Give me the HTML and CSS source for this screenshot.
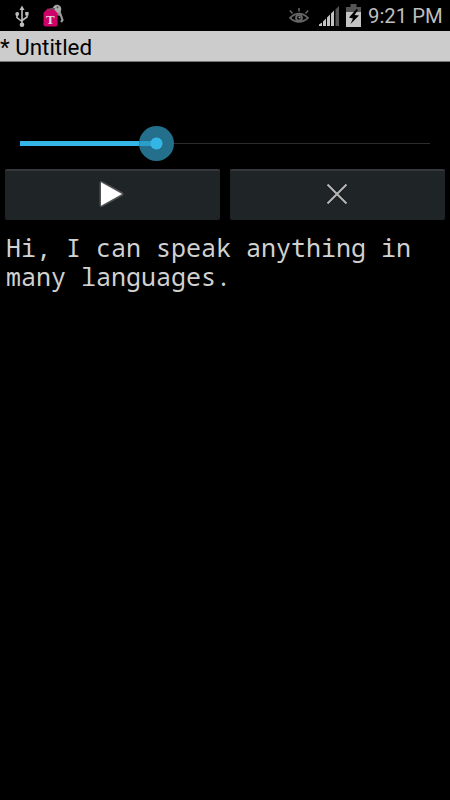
FILE: index.html
```
<!DOCTYPE html>
<html lang="en">
<head>
    <meta charset="UTF-8">
    <meta name="viewport" content="width=device-width, initial-scale=1.0">
    <title>Untitled</title>
    <link rel="stylesheet" href="styles.css">
</head>
<body>
    <div class="status-bar">
        <div class="notifications">
            <svg class="usb-icon" width="14" height="24" viewBox="0 0 14 24">
                <path d="M7 4V20M2 9V12.500L7 16.500M12 8.500V12L7 15.500" fill="none" stroke="#bdbdbd" stroke-width="1.600"/>
                <path d="M7 0.500L9.500 5H4.500Z" fill="#bdbdbd"/>
                <circle cx="7" cy="19.700" r="2.300" fill="#bdbdbd"/>
                <circle cx="2.200" cy="9" r="1.900" fill="#bdbdbd"/>
                <rect x="10.200" y="7" width="3.400" height="3.400" fill="#bdbdbd"/>
            </svg>
            <svg class="carrier-icon" width="22" height="24" viewBox="0 0 22 24">
                <path d="M12 5L17 6L17 12L13 11Z" fill="#888"/>
                <path d="M16 6L19.500 16L18 18" fill="none" stroke="#999" stroke-width="2.200"/>
                <circle cx="14" cy="5" r="4.300" fill="#aaa"/>
                <circle cx="14.500" cy="3.300" r="1" fill="#555"/>
                <path d="M4.500 4.500H10L14.500 9V20.500Q14.500 22.500 12.500 22.500H2.500Q0.500 22.500 0.500 20.500V9Z" fill="#cf0067"/>
                <path d="M6 7Q7.500 3.500 12 5" fill="none" stroke="#555" stroke-width="1.600"/>
                <text x="7.400" y="20.300" class="carrier-letter">T</text>
            </svg>
        </div>
        <div class="indicators">
            <svg class="eye-icon" width="20" height="18" viewBox="0 0 20 18">
                <path d="M1 10.800Q10 2.500 19 10.800Q10 19 1 10.800Z" fill="none" stroke="#666" stroke-width="1.800"/>
                <circle cx="10" cy="10.800" r="2.900" fill="none" stroke="#666" stroke-width="2"/>
                <circle cx="10.500" cy="10.500" r="1" fill="#999"/>
                <path d="M10 1V4.500M0.800 3.500L3.500 6.500M19.200 3.500L16.500 6.500" stroke="#666" stroke-width="1.500"/>
            </svg>
            <svg class="signal-icon" width="21" height="21" viewBox="0 0 21 21">
                <path d="M0 20V18.500L3 16.500V20ZM4 20V15.500L7 12.500V20ZM8 20V11.500L11 8.500V20ZM12 20V7.500L15 4.500V20Z" fill="#c4c4c4"/>
                <path d="M16.500 20V3.500L20 0V20Z" fill="#555"/>
            </svg>
            <svg class="battery-icon" width="15" height="23" viewBox="0 0 15 23">
                <path d="M4.500 0H10.500V3H15V9H0V3H4.500Z" fill="#555"/>
                <rect y="8" width="15" height="15" fill="#c4c4c4"/>
                <path d="M10.500 5L3 13.500L7 14.500L4.500 20L13 11.500L8.500 11L12 6Z" fill="#000"/>
            </svg>
            <span class="clock">9:21 PM</span>
        </div>
    </div>

    <div class="title-bar">* Untitled</div>

    <div class="slider">
        <div class="slider-fill"></div>
        <div class="slider-thumb"></div>
        <div class="slider-track"></div>
    </div>

    <div class="controls">
        <button class="control-btn" aria-label="Play">
            <svg width="28" height="30" viewBox="0 0 28 30">
                <path d="M3.500 4L23.500 15L3.500 26Z" fill="#fff" stroke="#505254" stroke-width="4" stroke-linejoin="round"/>
                <path d="M3 3.200L24 15L3 26.800Z" fill="#fff"/>
            </svg>
        </button>
        <button class="control-btn" aria-label="Clear">
            <svg width="28" height="30" viewBox="0 0 28 30">
                <path d="M4.300 5.300L23.700 24.700M23.700 5.300L4.300 24.700" stroke="#14171a" stroke-width="4"/>
                <path d="M4.500 5.500L23.500 24.500M23.500 5.500L4.500 24.500" stroke="#b4b4b4" stroke-width="2.200"/>
            </svg>
        </button>
    </div>

    <div class="speech-text">Hi, I can speak anything in many languages.</div>
</body>
</html>
```
FILE: styles.css
```
/* General Styles */
body {
    margin: 0;
    background: #000;
    font-family: Roboto, sans-serif;
    min-height: 100vh;
}

svg {
    display: block;
    flex-shrink: 0;
}

/* Status Bar */
.status-bar {
    height: 31px;
    display: flex;
    justify-content: space-between;
}

.notifications,
.indicators {
    display: flex;
    align-items: flex-start;
}

.usb-icon {
    margin: 5px 0 0 15px;
}

.carrier-icon {
    margin: 4px 0 0 14px;
}

.carrier-letter {
    font-family: "Liberation Serif", serif;
    font-size: 13px;
    font-weight: bold;
    text-anchor: middle;
    fill: #ddd;
}

.eye-icon {
    margin: 7px 10px 0 0;
}

.signal-icon {
    margin: 6px 6px 0 0;
}

.battery-icon {
    margin: 4px 7px 0 0;
}

.clock {
    width: 82px;
    color: #bebebe;
    font-size: 20.3px;
    line-height: 32px;
    white-space: nowrap;
}

/* Title Bar */
.title-bar {
    height: 31px;
    box-sizing: border-box;
    border-bottom: 1px solid #777;
    background: #ccc;
    color: #000;
    font-size: 22.4px;
    line-height: 32px;
}

/* Slider */
.slider {
    display: flex;
    align-items: center;
    height: 35px;
    margin: 64px 20px 8px;
}

.slider-fill {
    width: 119px;
    height: 5px;
    background: #33b5e5;
}

.slider-thumb {
    width: 35px;
    height: 35px;
    border-radius: 50%;
    background:
        radial-gradient(circle, #33b5e5 5.700px, transparent 6.300px),
        linear-gradient(#2a9dc8, #2a9dc8) left center / 17px 5px no-repeat,
        #236f8c;
}

.slider-track {
    flex: 1;
    height: 1px;
    background: #2c2c2c;
}

/* Buttons */
.controls {
    display: flex;
    gap: 10px;
    padding: 0 5px;
}

.control-btn {
    flex: 1;
    display: flex;
    justify-content: center;
    align-items: center;
    height: 51px;
    padding: 0 1px 3px 0;
    border: none;
    border-top: 2px solid #34383b;
    border-radius: 2px;
    background: #1f2427;
}

/* Text */
.speech-text {
    padding: 13px 6px;
    color: #d0d0d0;
    font-family: "Noto Sans Mono", "DejaVu Sans Mono", monospace;
    font-size: 25px;
    line-height: 29px;
}
```
